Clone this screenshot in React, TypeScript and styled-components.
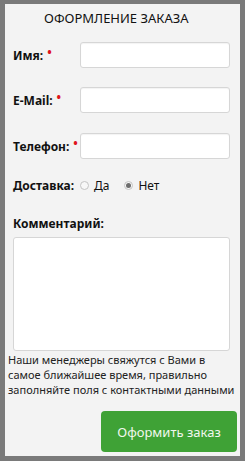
import styled, { createGlobalStyle } from "styled-components";

const GlobalStyle = createGlobalStyle`
    html, body {
        margin: 0;
        padding: 0;
        background: #7a7a7a;
    }
    body {
        font-family: "Noto Sans", "DejaVu Sans", sans-serif;
        color: #111;
    }
`;

const Panel = styled.form`
    box-sizing: border-box;
    width: 235px;
    height: 452px;
    margin: 4px 5px 5px 5px;
    background: #f3f3f3;
    padding: 0 3px 0 3px;
    display: flex;
    flex-direction: column;
`;

const Title = styled.h1`
    margin: 0;
    height: 29px;
    line-height: 29px;
    padding-left: 36px;
    font-size: 13px;
    font-weight: 400;
    text-transform: uppercase;
    color: #111;
`;

const Row = styled.div<{ $gap: number }>`
    display: grid;
    grid-template-columns: 67px 150px;
    align-items: center;
    padding-left: 5px;
    margin-top: ${({ $gap }) => $gap}px;
`;

const Label = styled.label`
    font-size: 12px;
    font-weight: 700;
    white-space: nowrap;
`;

const Req = styled.span`
    color: #e0141b;
    margin-left: 4px;
    position: relative;
    top: -3px;
`;

const Input = styled.input`
    box-sizing: border-box;
    height: 26px;
    width: 150px;
    border: 1px solid #d6d6d6;
    border-radius: 3px;
    background: #fff;
    box-shadow: inset 0 1px 1px rgba(0, 0, 0, 0.05);
    outline: none;
`;

const Radios = styled.div`
    display: flex;
    align-items: center;
    font-size: 12px;
`;

const RadioLabel = styled.label`
    display: flex;
    align-items: center;
    gap: 5px;
    margin-right: 15px;
`;

const Radio = styled.input`
    appearance: none;
    box-sizing: border-box;
    width: 9px;
    height: 9px;
    margin: 0;
    border: 1px solid #c4c4c4;
    border-radius: 50%;
    background: #f7f7f7;
    display: grid;
    place-items: center;

    &:checked::after {
        content: "";
        width: 5px;
        height: 5px;
        border-radius: 50%;
        background: #6d6d6d;
    }
`;

const CommentLabel = styled(Label)`
    display: block;
    padding-left: 5px;
    margin-top: 21px;
`;

const TextArea = styled.textarea`
    box-sizing: border-box;
    display: block;
    margin: 5px 0 0 5px;
    width: 217px;
    height: 114px;
    border: 1px solid #d6d6d6;
    border-radius: 3px;
    background: #fff;
    resize: none;
    outline: none;
`;

const Note = styled.p`
    margin: 1px 0 0 0;
    font-size: 11px;
    line-height: 15px;
    color: #222;
`;

const Submit = styled.button`
    align-self: flex-end;
    margin-top: 14px;
    margin-right: 0;
    width: 136px;
    height: 41px;
    border: none;
    border-radius: 4px;
    background: #3fa236;
    color: #f1f7ee;
    font-family: inherit;
    font-size: 13px;
`;

export default function App() {
    return (
        <>
            <GlobalStyle />
            <Panel onSubmit={(e) => e.preventDefault()}>
                <Title>Оформление заказа</Title>

                <Row $gap={9}>
                    <Label>Имя:<Req>•</Req></Label>
                    <Input type="text" />
                </Row>
                <Row $gap={19}>
                    <Label>E-Mail:<Req>•</Req></Label>
                    <Input type="email" />
                </Row>
                <Row $gap={20}>
                    <Label>Телефон:<Req>•</Req></Label>
                    <Input type="tel" />
                </Row>

                <Row $gap={18}>
                    <Label>Доставка:</Label>
                    <Radios>
                        <RadioLabel><Radio type="radio" name="dostavka" />Да</RadioLabel>
                        <RadioLabel><Radio type="radio" name="dostavka" defaultChecked />Нет</RadioLabel>
                    </Radios>
                </Row>

                <CommentLabel>Комментарий:</CommentLabel>
                <TextArea />

                <Note>
                    Наши менеджеры свяжутся с Вами в самое ближайшее время, правильно
                    заполняйте поля с контактными данными
                </Note>

                <Submit type="submit">Оформить заказ</Submit>
            </Panel>
        </>
    );
}
